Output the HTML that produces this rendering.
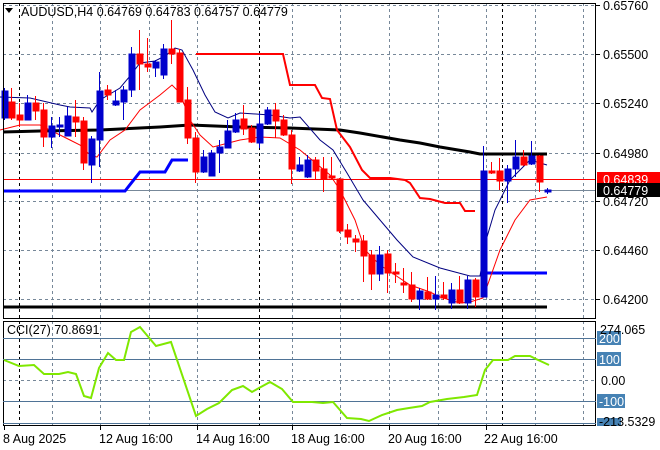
<!DOCTYPE html>
<html><head><meta charset="utf-8"><style>
html,body{margin:0;padding:0;background:#fff;}
svg{display:block;font-family:"Liberation Sans",sans-serif;font-size:12.5px;}
</style></head><body>
<svg width="660" height="450" viewBox="0 0 660 450" xmlns="http://www.w3.org/2000/svg">
<rect width="660" height="450" fill="#fff"/>
<g stroke="#778899" stroke-width="1" stroke-dasharray="3,3" fill="none">
<path d="M3 5.5H595M3 54.5H595M3 103.5H595M3 153.5H595M3 201.5H595M3 250.5H595M3 299.5H595"/>
<path d="M52.5 3V318M100.5 3V318M149.5 3V318M197.5 3V318M292.5 3V318M340.5 3V318M389.5 3V318M438.5 3V318M486.5 3V318M535.5 3V318M583.5 3V318"/>
<path d="M52.5 321V426M100.5 321V426M149.5 321V426M197.5 321V426M292.5 321V426M340.5 321V426M389.5 321V426M438.5 321V426M486.5 321V426M535.5 321V426M583.5 321V426"/>
<path d="M3 380.5H596"/>
</g>
<g stroke="#000" stroke-width="1" stroke-dasharray="3,3" fill="none">
<path d="M19.5 3V318M259.5 3V318M502.5 3V318M19.5 321V426M259.5 321V426M502.5 321V426"/>
</g>
<path d="M3 179.5H595" stroke="#ff0000" stroke-width="1"/>
<path d="M3 190.5H595" stroke="#778899" stroke-width="1"/>
<path d="M3 307H547" stroke="#000" stroke-width="3"/>
<polyline fill="none" stroke="#000" stroke-width="3" points="3,132 40,131 100,130 160,127 190,125 240,127 290,128 340,130 360,133 400,140 420,143 440,147 470,152 480,154 547,154"/>
<polyline fill="none" stroke="#0000ff" stroke-width="3" points="3,191 125,191 140,172 165,172 172,160 188,160"/>
<polyline fill="none" stroke="#0000ff" stroke-width="3" points="483,273 547,273"/>
<polyline fill="none" stroke="#ff0000" stroke-width="2" points="196,54 283,54 290,85 315,85 322,98 330,99 337,130 350,147 362,170 370,178 390,178 405,180 410,183 420,198 430,199 445,203 460,203 465,211 475,211"/>
<polyline fill="none" stroke="#000080" stroke-width="1" points="0,97 30,98 60,105 70,107 90,108 92,112 100,100 120,88 130,76 140,63 155,61 165,56 175,48 182,50 193,70 205,95 215,112 228,118 240,113 270,115 290,118 300,117 320,140 333,150 347,173 363,200 380,220 397,240 413,257 440,268 470,276 480,276 487,237 495,210 510,180 530,160 547,165"/>
<polyline fill="none" stroke="#ff0000" stroke-width="1" points="0,130 20,125 40,125 50,130 70,140 80,145 90,155 97,157 110,140 125,130 140,110 160,95 172,85 180,93 190,120 200,135 213,147 240,140 260,137 280,138 300,150 330,175 340,190 355,220 365,250 380,265 395,275 410,285 430,292 440,297 460,303 470,302 483,298 500,250 515,220 530,200 547,197"/>
<g stroke-width="1">
<g stroke="#0000cc" fill="#0000cc">
<path d="M4.5 88V120M27.5 95V120M51.5 117V148M59.5 117V137M67.5 107V136M91.5 136V183M99.5 72V167M115.5 90V106M123.5 86V120M131.5 47V97M155.5 60V77M163.5 44V79M203.5 150V173M211.5 150V176M219.5 140V173M227.5 120V148M235.5 113V133M259.5 113V148M267.5 107V125M299.5 157V172M307.5 155V178M379.5 246V281M419.5 288V310M435.5 276V310M451.5 283V309M467.5 276V309M483.5 146V297M507.5 165V203M515.5 140V177M531.5 141V165M547.5 188V194"/>
<rect x="2" y="91" width="6" height="27"/><rect x="25" y="103" width="6" height="17"/><rect x="49" y="126" width="6" height="11"/><rect x="57" y="125" width="6" height="2"/><rect x="65" y="116" width="6" height="20"/><rect x="89" y="139" width="6" height="26"/><rect x="97" y="91" width="6" height="49"/><rect x="113" y="101" width="6" height="4"/><rect x="121" y="90" width="6" height="12"/><rect x="129" y="54" width="6" height="36"/><rect x="153" y="62" width="6" height="6"/><rect x="161" y="49" width="6" height="26"/><rect x="201" y="157" width="6" height="15"/><rect x="209" y="153" width="6" height="23"/><rect x="217" y="147" width="6" height="6"/><rect x="225" y="131" width="6" height="17"/><rect x="233" y="120" width="6" height="12"/><rect x="257" y="124" width="6" height="19"/><rect x="265" y="110" width="6" height="14"/><rect x="297" y="165" width="6" height="6"/><rect x="305" y="160" width="6" height="17"/><rect x="377" y="255" width="6" height="19"/><rect x="417" y="291" width="6" height="8"/><rect x="433" y="295" width="6" height="4"/><rect x="449" y="290" width="6" height="13"/><rect x="465" y="280" width="6" height="23"/><rect x="481" y="171" width="6" height="126"/><rect x="505" y="169" width="6" height="12"/><rect x="513" y="157" width="6" height="12"/><rect x="529" y="156" width="6" height="8"/><rect x="545" y="190" width="6" height="2"/>
</g>
<g stroke="#ff0000" fill="#ff0000">
<path d="M11.5 88V120M19.5 103V127M35.5 96V120M43.5 103V147M75.5 100V137M83.5 117V170M107.5 85V100M139.5 30V90M147.5 38V72M171.5 20V64M179.5 49V102M187.5 87V144M195.5 132V183M243.5 105V135M251.5 125V143M275.5 103V138M283.5 115V136M291.5 130V184M315.5 157V179M323.5 157V192M331.5 157V179M339.5 178V233M347.5 224V244M355.5 235V252M363.5 235V282M371.5 250V290M387.5 250V293M395.5 263V283M403.5 268V293M411.5 272V302M427.5 277V300M443.5 282V300M459.5 276V304M475.5 278V307M491.5 162V174M499.5 158V190M523.5 150V166M539.5 155V192"/>
<rect x="9" y="102" width="6" height="16"/><rect x="17" y="115" width="6" height="5"/><rect x="33" y="103" width="6" height="8"/><rect x="41" y="110" width="6" height="27"/><rect x="73" y="117" width="6" height="5"/><rect x="81" y="121" width="6" height="42"/><rect x="105" y="90" width="6" height="5"/><rect x="137" y="54" width="6" height="10"/><rect x="145" y="64" width="6" height="3"/><rect x="169" y="49" width="6" height="5"/><rect x="177" y="53" width="6" height="49"/><rect x="185" y="100" width="6" height="38"/><rect x="193" y="138" width="6" height="34"/><rect x="241" y="119" width="6" height="10"/><rect x="249" y="128" width="6" height="14"/><rect x="273" y="110" width="6" height="11"/><rect x="281" y="120" width="6" height="15"/><rect x="289" y="135" width="6" height="34"/><rect x="313" y="160" width="6" height="11"/><rect x="321" y="169" width="6" height="10"/><rect x="329" y="176" width="6" height="2"/><rect x="337" y="179" width="6" height="52"/><rect x="345" y="230" width="6" height="7"/><rect x="353" y="239" width="6" height="3"/><rect x="361" y="241" width="6" height="15"/><rect x="369" y="255" width="6" height="19"/><rect x="385" y="254" width="6" height="19"/><rect x="393" y="272" width="6" height="2"/><rect x="401" y="283" width="6" height="2"/><rect x="409" y="285" width="6" height="14"/><rect x="425" y="292" width="6" height="7"/><rect x="441" y="295" width="6" height="3"/><rect x="457" y="290" width="6" height="13"/><rect x="473" y="280" width="6" height="17"/><rect x="489" y="171" width="6" height="2"/><rect x="497" y="171" width="6" height="10"/><rect x="521" y="157" width="6" height="8"/><rect x="537" y="156" width="6" height="26"/>
</g>
</g>
<rect x="3.5" y="3.5" width="592" height="315" fill="none" stroke="#000"/>
<rect x="3.5" y="321.5" width="592" height="104" fill="none" stroke="#000"/>
<path d="M596 5.5H600M596 54.5H600M596 103.5H600M596 153.5H600M596 201.5H600M596 250.5H600M596 299.5H600" stroke="#000"/>
<g fill="#000">
<text x="603" y="10">0.65760</text>
<text x="603" y="59">0.65500</text>
<text x="603" y="108">0.65240</text>
<text x="603" y="158">0.64980</text>
<text x="603" y="206">0.64720</text>
<text x="603" y="255">0.64460</text>
<text x="603" y="304">0.64200</text>
</g>
<rect x="597" y="172" width="63" height="14" fill="#ff0000"/>
<text x="603" y="184" fill="#fff">0.64839</text>
<rect x="597" y="183" width="63" height="14" fill="#000"/>
<text x="603" y="195" fill="#fff">0.64779</text>
<path d="M5 8H13L9 13Z" fill="#000"/>
<text x="21" y="16" fill="#000">AUDUSD,H4  0.64769 0.64783 0.64757 0.64779</text>
<path d="M3 338.5H596M3 359.5H596M3 401.5H596M3 423.5H596" stroke="#4f7396" stroke-width="1"/>
<polyline fill="none" stroke="#7fe800" stroke-width="2" points="4,360 19,366 34,365 44,374 59,374 68,372 76,374 84,396 91,398 99,368 108,353 116,360 124,360 131,332 140,327 156,346 171,342 196,416 207,409 219,403 232,390 243,386 252,392 259,388 270,382 282,389 293,402 312,402 323,403 333,402 347,418 361,419 369,421 382,415 397,410 409,408 422,406 430,402 447,399 464,397 477,395 485,370 493,360 508,360 515,356 530,356 536,359 549,365"/>
<text x="7" y="334" fill="#000">CCI(27) 70.8691</text>
<rect x="597" y="331" width="24" height="14" fill="#4682b4"/>
<rect x="597" y="352" width="24" height="14" fill="#4682b4"/>
<rect x="597" y="394" width="28" height="14" fill="#4682b4"/>
<rect x="597" y="418" width="24" height="8" fill="#4682b4"/>
<g fill="#fff"><text x="599" y="343">200</text><text x="599" y="364">100</text><text x="599" y="406">-100</text></g>
<g fill="#000"><text x="600" y="334">274.065</text><text x="601" y="385">0.00</text><text x="599" y="426">-213.5329</text></g>
<path d="M4.5 426V430M100.5 426V430M197.5 426V430M292.5 426V430M389.5 426V430M486.5 426V430" stroke="#000"/>
<g fill="#000">
<text x="3" y="443">8 Aug 2025</text>
<text x="99" y="443">12 Aug 16:00</text>
<text x="196" y="443">14 Aug 16:00</text>
<text x="291" y="443">18 Aug 16:00</text>
<text x="388" y="443">20 Aug 16:00</text>
<text x="484" y="443">22 Aug 16:00</text>
</g>
</svg>
</body></html>
